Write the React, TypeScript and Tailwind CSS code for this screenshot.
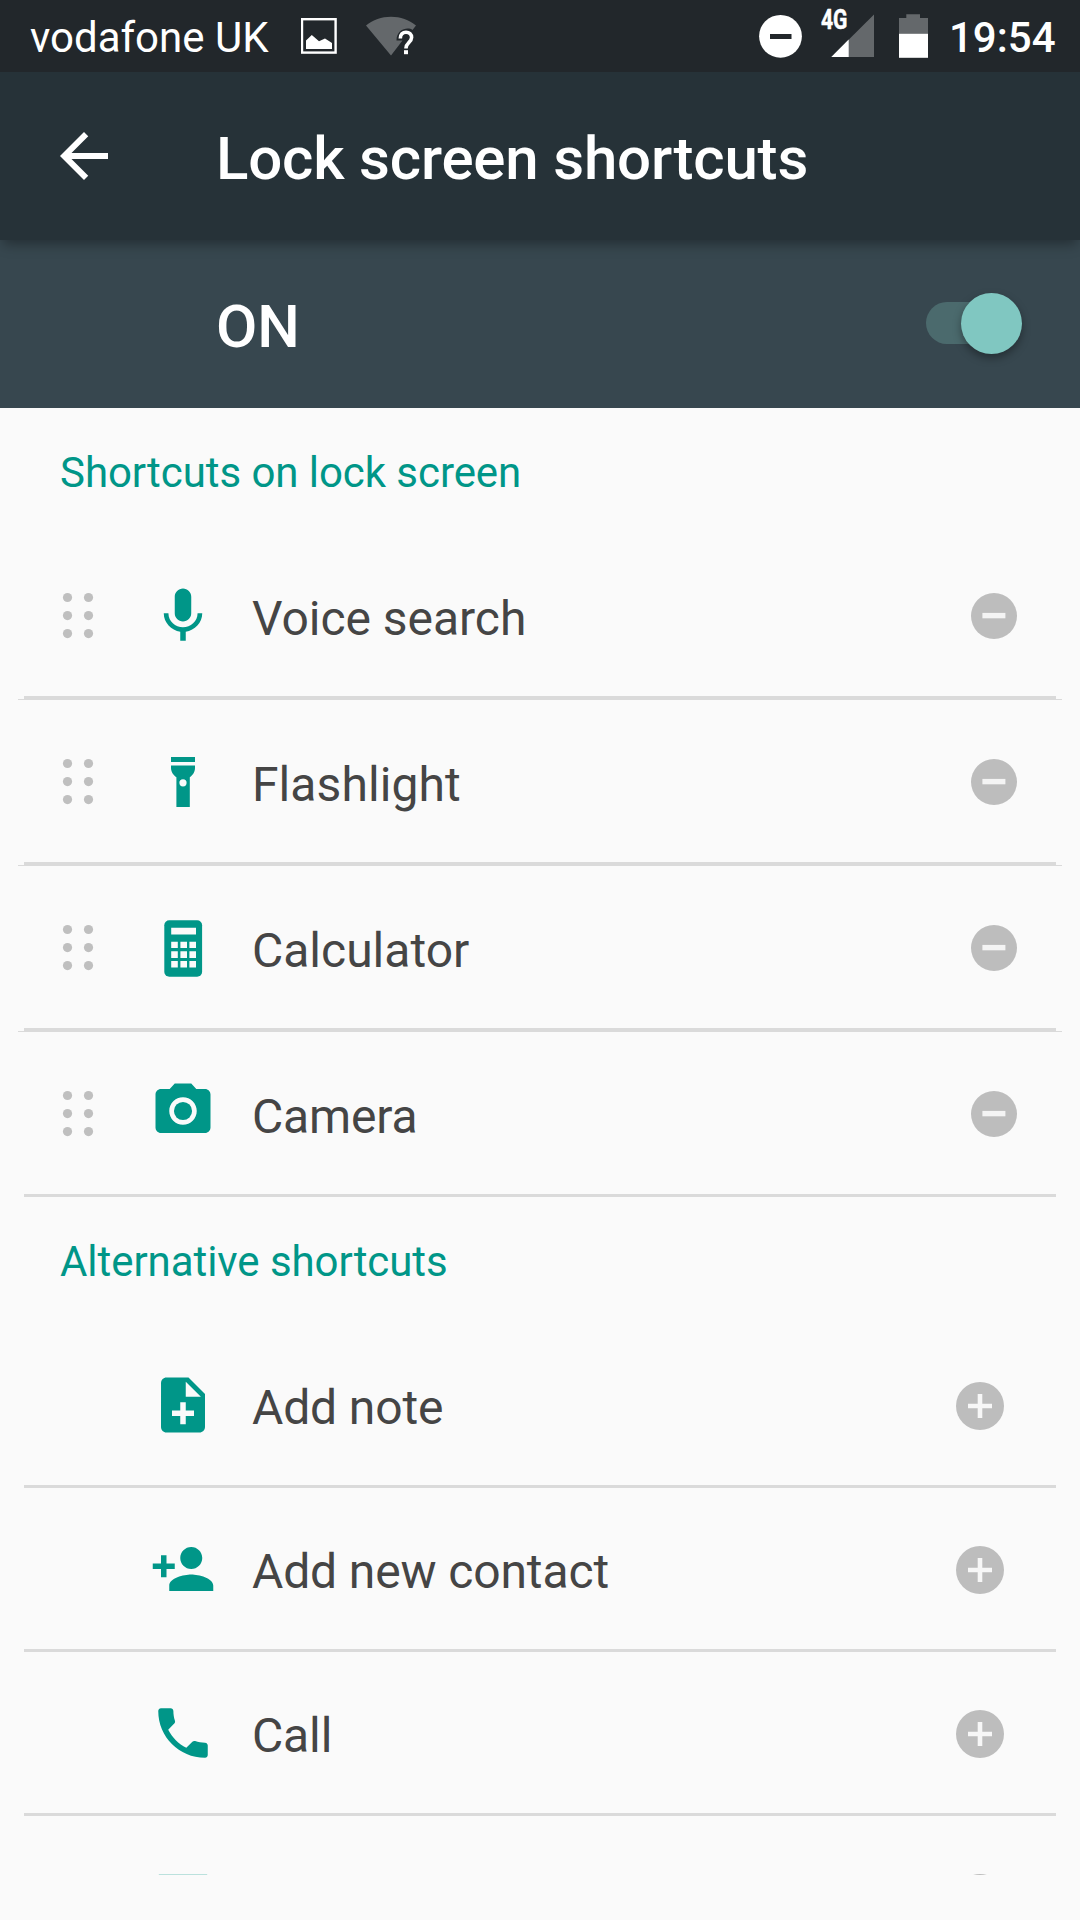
import type { ReactNode } from "react";

type IconProps = { className?: string; children: ReactNode };

function Glyph({ className = "", children }: IconProps) {
  return (
    <svg viewBox="0 0 24 24" className={`block size-[66px] shrink-0 fill-[#009688] ${className}`}>
      {children}
    </svg>
  );
}

const mic = (
  <Glyph>
    <path d="M12 14c1.66 0 2.99-1.34 2.99-3L15 5c0-1.66-1.34-3-3-3S9 3.34 9 5v6c0 1.66 1.34 3 3 3zm5.3-3c0 3-2.54 5.1-5.3 5.1S6.7 14 6.7 11H5c0 3.41 2.72 6.23 6 6.72V21h2v-3.28c3.28-.48 6-3.3 6-6.72h-1.7z" />
  </Glyph>
);

const flashlight = (
  <svg viewBox="0 0 66 66" className="block size-[66px] shrink-0 fill-[#009688]">
    <path d="M21 8h24v5H21zM21 16.5h24v2.5c0 4-2.4 7.4-5.2 9.2V58H26.4V28.2C23.6 26.4 21 23 21 19zM33 30.2a3.6 3.6 0 1 0 0 7.2 3.6 3.6 0 0 0 0-7.2z" />
  </svg>
);

const calculator = (
  <svg viewBox="0 0 66 66" className="block size-[66px] shrink-0">
    <rect x="14.3" y="5.2" width="37.8" height="56.5" rx="5" className="fill-[#009688]" />
    <path
      className="fill-[#fafafa]"
      d="M21.2 12.7H46v6.7H21.2zM21.2 26.7h6.6V33h-6.6zM30.4 26.7H37V33h-6.6zM39.4 26.7H46V33h-6.6zM21.2 36.3h6.6V43h-6.6zM30.4 36.3H37V43h-6.6zM39.4 36.3H46V43h-6.6zM21.2 46h6.6v6.4h-6.6zM30.4 46H37v6.4h-6.6zM39.4 46H46v6.4h-6.6z"
    />
  </svg>
);

const camera = (
  <Glyph className="-mt-[6px]">
    <circle cx="12" cy="12" r="3.3" />
    <path d="M9 2L7.17 4H4c-1.1 0-2 .9-2 2v12c0 1.1.9 2 2 2h16c1.1 0 2-.9 2-2V6c0-1.1-.9-2-2-2h-3.17L15 2H9zm3 15c-2.76 0-5-2.24-5-5s2.24-5 5-5 5 2.24 5 5-2.24 5-5 5z" />
  </Glyph>
);

const noteAdd = (
  <Glyph className="-mt-[2px]">
    <path d="M14 2H6c-1.1 0-1.99.9-1.99 2L4 20c0 1.1.89 2 1.99 2H18c1.1 0 2-.9 2-2V8l-6-6zm2 14h-3v3h-2v-3H8v-2h3v-3h2v3h3v2zm-3-7V3.5L18.5 9H13z" />
  </Glyph>
);

const personAdd = (
  <Glyph className="-mt-[2px]">
    <path d="M15 12c2.21 0 4-1.79 4-4s-1.79-4-4-4-4 1.79-4 4 1.79 4 4 4zm-9-2V7H4v3H1v2h3v3h2v-3h3v-2H6zm9 4c-2.67 0-8 1.34-8 4v2h16v-2c0-2.66-5.33-4-8-4z" />
  </Glyph>
);

const call = (
  <Glyph className="-mt-[2px]">
    <path d="M6.62 10.79c1.44 2.83 3.76 5.14 6.59 6.59l2.2-2.2c.27-.27.67-.36 1.02-.24 1.12.37 2.33.57 3.57.57.55 0 1 .45 1 1V20c0 .55-.45 1-1 1-9.39 0-17-7.61-17-17 0-.55.45-1 1-1h3.5c.55 0 1 .45 1 1 0 1.25.2 2.45.57 3.57.11.35.03.74-.25 1.02l-2.2 2.2z" />
  </Glyph>
);

const sheet = (
  <svg viewBox="0 0 66 66" className="block size-[66px] shrink-0 fill-[#009688]">
    <rect x="8.5" y="9.85" width="49" height="49" rx="0.5" />
  </svg>
);

function DragHandle() {
  return (
    <svg viewBox="0 0 32 48" className="ml-[62px] block h-12 w-8 fill-[#bfbfbf]">
      <circle cx="5.5" cy="5.5" r="4.6" />
      <circle cx="26.5" cy="5.5" r="4.6" />
      <circle cx="5.5" cy="23.6" r="4.6" />
      <circle cx="26.5" cy="23.6" r="4.6" />
      <circle cx="5.5" cy="41.6" r="4.6" />
      <circle cx="26.5" cy="41.6" r="4.6" />
    </svg>
  );
}

function RemoveButton() {
  return (
    <button className="mr-[63px] block size-[46px] rounded-full bg-[#bdbdbd]">
      <svg viewBox="0 0 46 46" className="block size-[46px] fill-[#f4f4f4]">
        <rect x="11.4" y="19.9" width="23" height="5.4" />
      </svg>
    </button>
  );
}

function AddButton() {
  return (
    <button className="mr-[76px] block size-12 rounded-full bg-[#bdbdbd]">
      <svg viewBox="0 0 48 48" className="block size-12 fill-[#f7f7f7]">
        <path d="M21.7 12h4.6v9.700H36v4.6h-9.700V36h-4.6v-9.700H12v-4.6h9.700z" />
      </svg>
    </button>
  );
}

const active = [
  { label: "Voice search", icon: mic, tracking: "tracking-[-0.03px]" },
  { label: "Flashlight", icon: flashlight, tracking: "tracking-[0.08px]" },
  { label: "Calculator", icon: calculator, tracking: "tracking-normal" },
  { label: "Camera", icon: camera, tracking: "tracking-[-0.15px]" },
];

const alternatives = [
  { label: "Add note", icon: noteAdd },
  { label: "Add new contact", icon: personAdd },
  { label: "Call", icon: call },
  { label: "", icon: sheet },
];

function StatusBar() {
  return (
    <header className="relative z-20 flex h-[72px] items-start bg-[#22272b] text-[42px] leading-[72px] text-white">
      <span className="ml-[30px] w-[271px] pt-[2px] whitespace-nowrap">vodafone UK</span>
      <svg viewBox="0 0 36 36" className="mt-[18px] block size-9">
        <rect x="1" y="1.2" width="33.6" height="33.4" className="fill-none stroke-white stroke-[2.4]" />
        <path className="fill-white" d="M5 31V22.500l5.800-5.500 7.200 6.300 6-2.800 7 4.500v6z" />
      </svg>
      <svg viewBox="0 0 50 40" className="mt-4 ml-[29px] block h-10 w-[50px]">
        <path className="fill-[#64686b]" d="M0 9.5C7 4 15.500 .8 25 .8S43 4 50 9.500L46.500 14C42 10.500 30.500 13 30.500 24.500H36.500L25 39.500z" />
        <path className="fill-none stroke-white stroke-[3.6]" d="M34.300 22.500c0-4 2.500-6.300 5.700-6.300s5.600 2 5.600 5.400c0 4.600-5.600 5.400-5.600 10.400v.6" />
        <rect x="38" y="34.200" width="4" height="4" className="fill-white" />
      </svg>
      <div className="ml-auto flex">
        <svg viewBox="0 0 44 44" className="mt-[14px] block size-11">
          <circle cx="21.500" cy="22.300" r="21.400" className="fill-white" />
          <rect x="11" y="20" width="21.500" height="5" className="fill-[#22272b]" />
        </svg>
        <div className="relative ml-[28px] h-[72px] w-[44px]">
          <svg viewBox="0 0 44 44" className="mt-[14px] block size-11">
            <path className="fill-[#64686b]" d="M43 .500V43H.300z" />
            <path className="fill-white" d="M17.700 25.500V43H.300z" />
          </svg>
          <span className="absolute top-[8px] -left-[10px] origin-left scale-x-[0.780] text-[27px] leading-6 font-bold [-webkit-text-stroke:0.5px_white]">
            4G
          </span>
        </div>
        <svg viewBox="0 0 29 44" className="mt-[14px] ml-[24px] block h-11 w-[29px]">
          <path className="fill-[#64686b]" d="M0 4h7.300V.300h13.700V4H29v16H0z" />
          <path className="fill-white" d="M0 19.800h29v24H0z" />
        </svg>
        <span className="ml-[21px] w-[131px] pt-[2px] font-medium whitespace-nowrap">19:54</span>
      </div>
    </header>
  );
}

export default function App() {
  return (
    <div className="h-[1920px] w-[1080px] overflow-hidden bg-[#fafafa] font-[Roboto,sans-serif]">
      <StatusBar />
      <div className="relative z-10 flex h-[168px] items-center bg-[#263238] shadow-[0_7px_12px_-3px_rgba(0,0,0,0.35)]">
        <svg viewBox="0 0 24 24" className="ml-12 block size-[72px] fill-white">
          <path d="M20 11H7.830l5.590-5.590L12 4l-8 8 8 8 1.410-1.410L7.830 13H20v-2z" />
        </svg>
        <h1 className="ml-[96px] pt-[5px] text-[60px] leading-[72px] font-medium tracking-[-0.18px] text-white">
          Lock screen shortcuts
        </h1>
      </div>
      <div className="flex h-[168px] items-center bg-[#37474f]">
        <span className="ml-[216px] pt-[5px] text-[60px] leading-[72px] font-medium text-white">ON</span>
        <div className="-mt-[2px] mr-[58px] ml-auto flex h-[42px] w-[96px] items-center justify-end rounded-l-full bg-gradient-to-r from-[#4b6a6d] from-60% to-transparent to-60%">
          <span className="mt-px size-[61px] shrink-0 rounded-full bg-[#80c7c1] shadow-[0_4px_8px_rgba(0,0,0,0.35)]" />
        </div>
      </div>
      <main className="h-[1467px] overflow-hidden text-[#454545]">
        <h2 className="h-[126px] pt-[37px] pl-[60px] text-[42px] leading-[56px] tracking-[-0.06px] text-[#009688]">
          Shortcuts on lock screen
        </h2>
        <ul>
          {active.map((item, i) => (
            <li key={item.label}>
              <div className="flex h-[162px] items-center pt-[2px]">
                <DragHandle />
                <div className="ml-[56px]">{item.icon}</div>
                <span className={`ml-[36px] flex-1 pt-[5px] text-[48px] leading-[56px] ${item.tracking}`}>{item.label}</span>
                <RemoveButton />
              </div>
              <div className="mx-6 h-[3px] bg-[#dadada]" />
              {i < active.length - 1 && <div className="mx-[18px] h-px bg-[#dadada]" />}
            </li>
          ))}
        </ul>
        <h2 className="h-[127px] pt-[37px] pl-[60px] text-[42px] leading-[56px] tracking-[-0.06px] text-[#009688]">
          Alternative shortcuts
        </h2>
        <ul>
          {alternatives.map((item) => (
            <li key={item.label}>
              <div className="flex h-[161px] items-center pt-[3px]">
                <div className="ml-[150px]">{item.icon}</div>
                <span className="ml-[36px] flex-1 pt-[3px] text-[48px] leading-[56px] tracking-[-0.13px]">{item.label}</span>
                <AddButton />
              </div>
              <div className="mx-6 h-[3px] bg-[#dadada]" />
            </li>
          ))}
        </ul>
      </main>
    </div>
  );
}
